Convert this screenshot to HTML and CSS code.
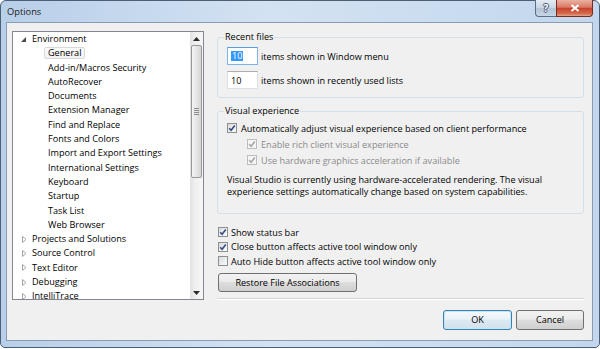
FILE: index.html
```html
<!DOCTYPE html>
<html lang="en">
<head>
  <meta charset="UTF-8" />
  <title>Options</title>
  <link rel="stylesheet" href="styles.css">
</head>
<body>
  <div class="window">
    <div class="titlebar">
      <span class="title">Options</span>
      <div class="caption-buttons">
        <span class="cap-btn help">?</span>
        <span class="cap-btn close">
          <svg viewBox="0 0 10 8" width="10" height="8"><path d="M1.5 1 8.5 7M8.5 1 1.5 7"/></svg>
        </span>
      </div>
    </div>

    <div class="client">
      <!-- category tree -->
      <div class="tree">
        <ul class="tree-list">
          <li class="node">
            <span class="twisty"><svg viewBox="0 0 13 9" width="13" height="9"><polygon class="open" points="7,2 7,7 2,7"/></svg></span>Environment
          </li>
          <li class="leaf"><span class="focus">General</span></li>
          <li class="leaf">Add-in/Macros Security</li>
          <li class="leaf">AutoRecover</li>
          <li class="leaf">Documents</li>
          <li class="leaf">Extension Manager</li>
          <li class="leaf">Find and Replace</li>
          <li class="leaf">Fonts and Colors</li>
          <li class="leaf">Import and Export Settings</li>
          <li class="leaf">International Settings</li>
          <li class="leaf">Keyboard</li>
          <li class="leaf">Startup</li>
          <li class="leaf">Task List</li>
          <li class="leaf">Web Browser</li>
          <li class="node">
            <span class="twisty"><svg viewBox="0 0 13 9" width="13" height="9"><polygon class="closed" points="3.5,1.5 7,4.5 3.5,7.5"/></svg></span>Projects and Solutions
          </li>
          <li class="node">
            <span class="twisty"><svg viewBox="0 0 13 9" width="13" height="9"><polygon class="closed" points="3.5,1.5 7,4.5 3.5,7.5"/></svg></span>Source Control
          </li>
          <li class="node">
            <span class="twisty"><svg viewBox="0 0 13 9" width="13" height="9"><polygon class="closed" points="3.5,1.5 7,4.5 3.5,7.5"/></svg></span>Text Editor
          </li>
          <li class="node">
            <span class="twisty"><svg viewBox="0 0 13 9" width="13" height="9"><polygon class="closed" points="3.5,1.5 7,4.5 3.5,7.5"/></svg></span>Debugging
          </li>
          <li class="node">
            <span class="twisty"><svg viewBox="0 0 13 9" width="13" height="9"><polygon class="closed" points="3.5,1.5 7,4.5 3.5,7.5"/></svg></span>IntelliTrace
          </li>
        </ul>

        <div class="scrollbar">
          <span class="sb-btn"><svg viewBox="0 0 7 4" width="7" height="4"><polygon points="3.5,0 7,4 0,4"/></svg></span>
          <span class="sb-thumb"><svg viewBox="0 0 5 7" width="5" height="7"><path d="M0 .5H5M0 2.5H5M0 4.5H5M0 6.5H5"/></svg></span>
          <span class="sb-track"></span>
          <span class="sb-btn"><svg viewBox="0 0 7 4" width="7" height="4"><polygon points="0,0 7,0 3.5,4"/></svg></span>
        </div>
      </div>

      <!-- settings pane -->
      <div class="pane">
        <fieldset class="group recent">
          <legend>Recent files</legend>
          <div class="field-row">
            <span class="textbox focused"><span class="selected">10</span></span>
            <span>items shown in Window menu</span>
          </div>
          <div class="field-row">
            <span class="textbox">10</span>
            <span>items shown in recently used lists</span>
          </div>
        </fieldset>

        <fieldset class="group visual">
          <legend>Visual experience</legend>
          <div class="check-row">
            <span class="cb"><svg viewBox="0 0 8 8" width="8" height="8"><path d="M1.2 4.2 3.1 6.3 6.8 1.5"/></svg></span>
            <span>Automatically adjust visual experience based on client performance</span>
          </div>
          <div class="check-row sub disabled">
            <span class="cb"><svg viewBox="0 0 8 8" width="8" height="8"><path d="M1.2 4.2 3.1 6.3 6.8 1.5"/></svg></span>
            <span>Enable rich client visual experience</span>
          </div>
          <div class="check-row sub disabled">
            <span class="cb"><svg viewBox="0 0 8 8" width="8" height="8"><path d="M1.2 4.2 3.1 6.3 6.8 1.5"/></svg></span>
            <span>Use hardware graphics acceleration if available</span>
          </div>
          <p class="note">Visual Studio is currently using hardware-accelerated rendering. The visual experience settings automatically change based on system capabilities.</p>
        </fieldset>

        <div class="options">
          <div class="check-row">
            <span class="cb"><svg viewBox="0 0 8 8" width="8" height="8"><path d="M1.2 4.2 3.1 6.3 6.8 1.5"/></svg></span>
            <span>Show status bar</span>
          </div>
          <div class="check-row">
            <span class="cb"><svg viewBox="0 0 8 8" width="8" height="8"><path d="M1.2 4.2 3.1 6.3 6.8 1.5"/></svg></span>
            <span>Close button affects active tool window only</span>
          </div>
          <div class="check-row">
            <span class="cb"></span>
            <span>Auto Hide button affects active tool window only</span>
          </div>
        </div>

        <button class="btn restore">Restore File Associations</button>

        <div class="separator"></div>

        <div class="footer">
          <button class="btn default">OK</button>
          <button class="btn">Cancel</button>
        </div>
      </div>
    </div>
  </div>
</body>
</html>
```

FILE: styles.css
```css
* {
  box-sizing: border-box;
}

body {
  margin: 0;
  background: #fff;
  color: #000;
  font-family: "Open Sans", "Noto Sans", sans-serif;
  font-size: 9.1px;
}

/* window frame */
.window {
  width: 600px;
  height: 348px;
  display: flex;
  flex-direction: column;
  padding: 0 6px 6px 5px;
  border: 1px solid #4d5f75;
  border-radius: 6px 6px 5px 5px;
  background: linear-gradient(to right, #b8cfe9, #d3e2f2 45%, #c2d7ed);
}

.titlebar {
  height: 21px;
  flex: none;
  display: flex;
  justify-content: space-between;
  align-items: flex-start;
}

.title {
  padding: 5px 0 0 1px;
  line-height: 12px;
  font-size: 9.3px;
  color: #1b1b1b;
}

.caption-buttons {
  display: flex;
  margin-top: -1px;
}

.cap-btn {
  height: 17px;
  display: flex;
  align-items: center;
  justify-content: center;
  border: 1px solid #5d6e84;
  border-top: none;
}

.help {
  width: 21px;
  border-right: none;
  border-radius: 0 0 0 4px;
  background: linear-gradient(#e4ecf4, #c9d6e4 50%, #b3c4d7 52%, #c7d6e6);
  color: #fff;
  font-weight: 700;
  font-size: 10px;
  text-shadow: 1px 0 0 #44566e, -1px 0 0 #44566e, 0 1px 0 #44566e, 0 -1px 0 #44566e;
}

.close {
  width: 37px;
  border-color: #7a2a1e;
  border-radius: 0 0 4px 0;
  background: linear-gradient(#eab0a2, #d97a64 45%, #c7432b 52%, #d46a4e 85%, #e3a58c);
}

.close path {
  fill: none;
  stroke: #fff;
  stroke-width: 2;
}

/* client area */
.client {
  flex: 1;
  display: flex;
  padding: 8px 8px 0 5px;
  border: 1px solid #8a9cb2;
  background: #f0f0f0;
}

/* tree */
.tree {
  width: 192px;
  height: 269px;
  flex: none;
  display: flex;
  border: 1px solid #828790;
  background: #fff;
}

.tree-list {
  flex: 1;
  margin: 0;
  padding: 0;
  list-style: none;
  overflow: hidden;
}

.tree-list li {
  height: 14.3px;
  line-height: 14.3px;
  display: flex;
  align-items: center;
  white-space: nowrap;
}

.node {
  padding-left: 6px;
}

.leaf {
  padding-left: 35px;
}

.twisty {
  width: 13px;
  display: flex;
}

.twisty .open {
  fill: #4a4a4a;
}

.twisty .closed {
  fill: #fff;
  stroke: #a6a6a6;
  stroke-width: 1;
}

.focus {
  margin-left: -4px;
  padding: 0 3px;
  line-height: 10px;
  border: 1px solid #d9d9d9;
  border-radius: 2px;
  background: linear-gradient(#fbfbfb, #f1f1f1);
}

.scrollbar {
  width: 13px;
  display: flex;
  flex-direction: column;
  background: linear-gradient(to right, #e2e2e2, #efefef 40%, #f6f6f6);
}

.sb-btn {
  height: 13px;
  flex: none;
  display: flex;
  align-items: center;
  justify-content: center;
}

.sb-btn polygon {
  fill: #2b2b2b;
}

.sb-thumb {
  height: 133px;
  flex: none;
  margin: 0 1px;
  display: flex;
  align-items: center;
  justify-content: center;
  border: 1px solid #979797;
  border-radius: 2px;
  background: linear-gradient(to right, #f4f4f4, #e6e6e6 50%, #d6d6d6);
}

.sb-thumb path {
  stroke: #8c8c8c;
  stroke-width: 1;
}

.sb-track {
  flex: 1;
}

/* settings pane */
.pane {
  width: 367px;
  margin-left: 13px;
  display: flex;
  flex-direction: column;
}

.group {
  margin: 0;
  min-width: 0;
  padding: 4px 9px 8px;
  border: 1px solid #d5dfe5;
  border-radius: 3px;
}

.group legend {
  margin-left: -3px;
  padding: 0 1px;
  line-height: 12px;
}

.field-row {
  height: 18px;
  display: flex;
  align-items: center;
  gap: 3px;
}

.field-row + .field-row {
  margin-top: 6px;
}

.textbox {
  width: 31px;
  height: 18px;
  padding-left: 3px;
  display: flex;
  align-items: center;
  border: 1px solid #dbdfe6;
  border-top-color: #abadb3;
  background: #fff;
}

.textbox.focused {
  border-color: #7eb4ea;
  border-top-color: #569de5;
}

.selected {
  padding: 0 1px;
  line-height: 10px;
  background: #3399ff;
  color: #fff;
}

.visual {
  margin-top: 7px;
  padding: 3px 9px 15px;
}

.check-row {
  height: 16px;
  display: flex;
  align-items: center;
  gap: 4px;
}

.check-row.sub {
  margin-left: 20px;
}

.cb {
  width: 10px;
  height: 10px;
  flex: none;
  display: flex;
  align-items: center;
  justify-content: center;
  border: 1px solid #8e8f8f;
  background: linear-gradient(135deg, #d8dbdf, #fbfbfb);
}

.cb path {
  fill: none;
  stroke: #34497f;
  stroke-width: 1.5;
}

.disabled {
  color: #8b8b8b;
}

.disabled .cb {
  border-color: #bdbdbd;
  background: #f5f5f5;
}

.disabled .cb path {
  stroke: #a5a5a5;
}

.note {
  max-width: 315px;
  margin: 6px 0 0;
  line-height: 12px;
}

.options {
  margin: 11px 0 0 1px;
}

.options .check-row {
  height: 14.5px;
  gap: 3px;
}

.btn {
  height: 19px;
  padding: 0;
  border: 1px solid #707070;
  border-radius: 3px;
  background: linear-gradient(#f2f2f2, #ebebeb 45%, #dddddd 50%, #cfcfcf);
  color: #000;
  font: inherit;
}

.restore {
  width: 139px;
  margin: 4px 0 0 1px;
}

.separator {
  height: 1px;
  margin-top: 6px;
  background: #d5d5d5;
  box-shadow: 0 1px 0 #fff;
}

.footer {
  margin-top: 11px;
  display: flex;
  justify-content: flex-end;
  gap: 4px;
}

.footer .btn {
  width: 68px;
  height: 20px;
}

.footer .default {
  width: 69px;
  border-color: #3c7fb1;
  box-shadow: inset 0 0 0 1px #bfe6fa;
  background: linear-gradient(#f4f9fc, #eaf2f8 45%, #dde9f2 50%, #d2e1ec);
}
```
